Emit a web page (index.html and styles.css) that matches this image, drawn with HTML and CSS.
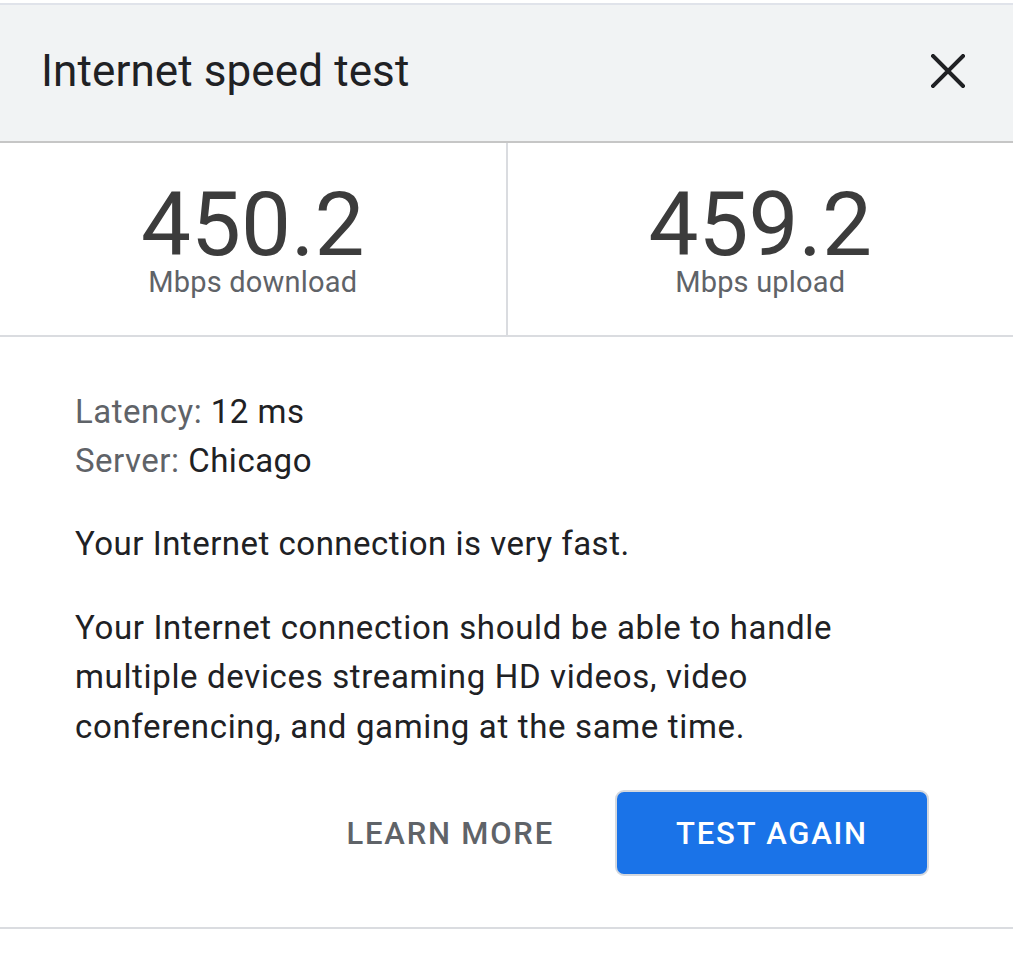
FILE: index.html
```html
<!DOCTYPE html>
<html>
<head>
<meta charset="utf-8">
<link rel="stylesheet" href="styles.css">
</head>
<body>
<div class="dialog">
  <header class="header">
    <h1 class="title">Internet speed test</h1>
    <button class="close" aria-label="Close">
      <svg width="34" height="34" viewBox="0 0 34 34"><path d="M2 2L32 32M32 2L2 32" stroke="#202124" stroke-width="4" stroke-linecap="square"/></svg>
    </button>
  </header>
  <section class="stats">
    <div class="stat">
      <div class="value">450.2</div>
      <div class="unit">Mbps download</div>
    </div>
    <div class="stat">
      <div class="value">459.2</div>
      <div class="unit">Mbps upload</div>
    </div>
  </section>
  <section class="body">
    <div class="meta">
      <div><span class="label">Latency:</span> 12 ms</div>
      <div><span class="label">Server:</span> Chicago</div>
    </div>
    <p class="para">Your Internet connection is very fast.</p>
    <p class="para para-long">Your Internet connection should be able to handle multiple devices streaming HD videos, video conferencing, and gaming at the same time.</p>
    <div class="actions">
      <button class="btn-text">LEARN MORE</button>
      <button class="btn-primary">TEST AGAIN</button>
    </div>
  </section>
</div>
</body>
</html>
```

FILE: styles.css
```css
html, body {
  margin: 0;
  padding: 0;
  background: #ffffff;
}
body {
  font-family: Roboto, "Noto Sans", sans-serif;
  color: #202124;
  padding-top: 3px;
}
.dialog {
  width: 1013px;
}
.header {
  height: 140px;
  background: #f1f3f4;
  border-top: 2px solid #e0e3ea;
  border-bottom: 2px solid #c6c6c6;
  display: flex;
  align-items: center;
  justify-content: space-between;
  padding: 0 48px 0 41px;
  box-sizing: border-box;
}
.title {
  margin: -4px 0 0 0;
  font-weight: 400;
  font-size: 44px;
  color: #202124;
  letter-spacing: 0.1px;
}
.close {
  border: 0;
  background: none;
  padding: 0;
  width: 34px;
  height: 34px;
  display: flex;
  margin-top: -4px;
}
.stats {
  display: flex;
  height: 194px;
  border-bottom: 2px solid #dadce0;
  box-sizing: border-box;
}
.stat {
  flex: 1;
  display: flex;
  flex-direction: column;
  align-items: center;
  padding-top: 40px;
}
.stat + .stat {
  border-left: 2px solid #dadce0;
}
.value {
  font-size: 89px;
  line-height: 84px;
  color: #3c3c3c;
}
.unit {
  font-size: 29px;
  line-height: 30px;
  color: #5f6368;
  letter-spacing: 0.2px;
}
.body {
  padding: 50px 75px 51px 75px;
  border-bottom: 2px solid #dadce0;
}
.meta {
  font-size: 33px;
  line-height: 49px;
  color: #202124;
  letter-spacing: 0.5px;
}
.label {
  color: #5f6368;
}
.para {
  margin: 34px 0 0 0;
  font-size: 33px;
  line-height: 49.5px;
  color: #202124;
  letter-spacing: 0.5px;
}
.para-long {
  letter-spacing: 0.65px;
  max-width: 800px;
}
.actions {
  display: flex;
  justify-content: flex-end;
  align-items: center;
  margin-top: 39px;
  padding-right: 9px;
}
.btn-text {
  border: 0;
  background: none;
  font-family: inherit;
  font-weight: 500;
  font-size: 31px;
  letter-spacing: 1.8px;
  color: #5f6368;
  padding: 0;
  margin-right: 61px;
}
.btn-primary {
  border: 2px solid #d4d8de;
  background: #1a73e8;
  color: #ffffff;
  font-family: inherit;
  font-weight: 500;
  font-size: 31px;
  letter-spacing: 1.8px;
  width: 314px;
  height: 86px;
  border-radius: 9px;
  padding: 0;
}
```
